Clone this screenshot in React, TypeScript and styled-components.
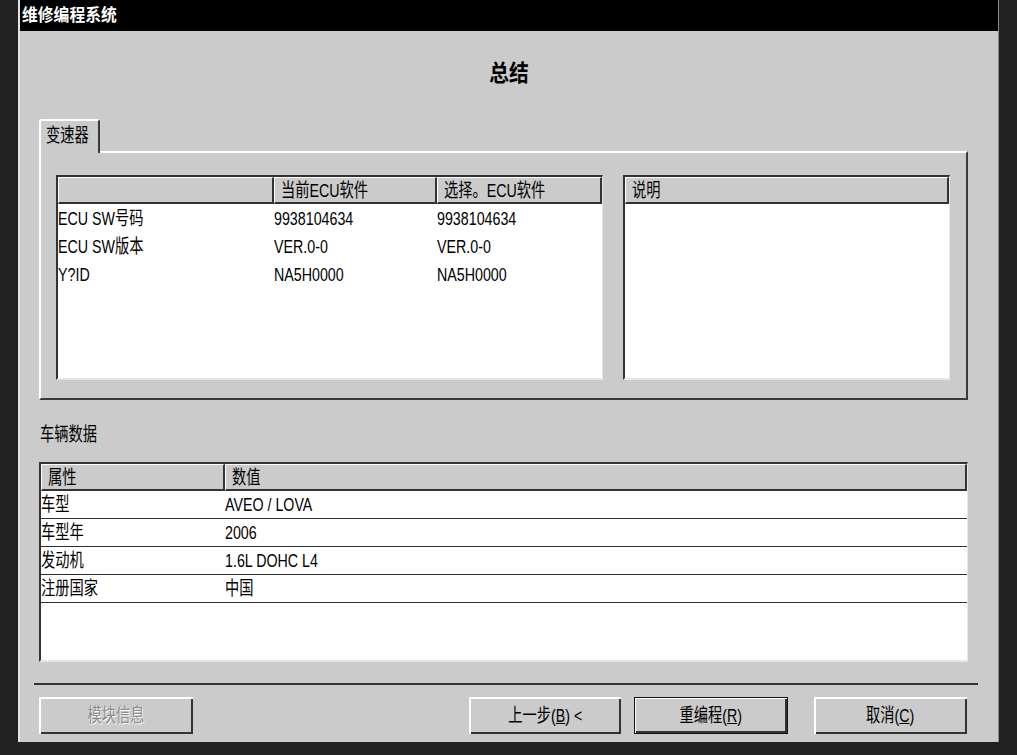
import React from 'react'
import styled, { createGlobalStyle } from 'styled-components'

const FONT = `"Liberation Sans", "Noto Sans CJK SC", sans-serif`

const GlobalStyle = createGlobalStyle`
  html, body {
    margin: 0;
    padding: 0;
    background: #222;
  }
  body {
    font-family: ${FONT};
    color: #000;
  }
`

// summary rows of the ECU table
const ECU_ROWS = [
  { name: 'ECU SW号码', current: '9938104634', selected: '9938104634' },
  { name: 'ECU SW版本', current: 'VER.0-0', selected: 'VER.0-0' },
  { name: 'Y?ID', current: 'NA5H0000', selected: 'NA5H0000' }
]

const VEHICLE_ROWS = [
  { key: '车型', value: 'AVEO / LOVA' },
  { key: '车型年', value: '2006' },
  { key: '发动机', value: '1.6L DOHC L4' },
  { key: '注册国家', value: '中国' }
]

const App = () => {
  return (
    <Screen>
      <GlobalStyle />
      <Window>
        <TitleBar>
          <TitleText>维修编程系统</TitleText>
        </TitleBar>

        <Heading>
          <Narrow $origin="center" $scale={0.86}>总结</Narrow>
        </Heading>

        <TabStrip>
          <Tab>
            <Narrow>变速器</Narrow>
          </Tab>
        </TabStrip>

        <Panel>
          <ListBox $width={547}>
            <HeaderRow $cols="216px 163px 1fr">
              <HeaderCell />
              <HeaderCell>
                <Narrow>当前ECU软件</Narrow>
              </HeaderCell>
              <HeaderCell>
                <Narrow>选择。ECU软件</Narrow>
              </HeaderCell>
            </HeaderRow>
            <Body>
              {ECU_ROWS.map((row) => (
                <Row key={row.name} $cols="216px 163px 1fr">
                  <Cell>
                    <Narrow>{row.name}</Narrow>
                  </Cell>
                  <Cell>
                    <Narrow>{row.current}</Narrow>
                  </Cell>
                  <Cell>
                    <Narrow>{row.selected}</Narrow>
                  </Cell>
                </Row>
              ))}
            </Body>
          </ListBox>

          <ListBox>
            <HeaderRow $cols="1fr">
              <HeaderCell>
                <Narrow>说明</Narrow>
              </HeaderCell>
            </HeaderRow>
            <Body />
          </ListBox>
        </Panel>

        <SectionLabel>
          <Narrow>车辆数据</Narrow>
        </SectionLabel>

        <DataTable>
          <HeaderRow $cols="184px 1fr">
            <HeaderCell>
              <Narrow>属性</Narrow>
            </HeaderCell>
            <HeaderCell>
              <Narrow>数值</Narrow>
            </HeaderCell>
          </HeaderRow>
          {VEHICLE_ROWS.map((row) => (
            <Row key={row.key} $cols="184px 1fr" $lined>
              <Cell>
                <Narrow>{row.key}</Narrow>
              </Cell>
              <Cell>
                <Narrow>{row.value}</Narrow>
              </Cell>
            </Row>
          ))}
        </DataTable>

        <Separator />

        <ButtonRow>
          <Button $width={154} disabled>
            <Narrow $origin="center">模块信息</Narrow>
          </Button>
          <Spacer />
          <Button $width={152}>
            <Narrow $origin="center">
              上一步(<Acc>B</Acc>) &lt;
            </Narrow>
          </Button>
          <Button $width={154} $gap={13} $default>
            <Narrow $origin="center">
              重编程(<Acc>R</Acc>)
            </Narrow>
          </Button>
          <Button $width={153} $gap={26}>
            <Narrow $origin="center">
              取消(<Acc>C</Acc>)
            </Narrow>
          </Button>
        </ButtonRow>
      </Window>
    </Screen>
  )
}

// Styled components
const Screen = styled.div`
  width: 1017px;
  height: 755px;
  background: #222;
  overflow: hidden;
`

const Window = styled.div`
  margin-left: 18px;
  width: 981px;
  height: 742px;
  box-sizing: border-box;
  background: #cbcbcb;
  border-left: 2px solid #e4e4e4;
  border-right: 1px solid #8a8a8a;
  display: flex;
  flex-direction: column;
`

const TitleBar = styled.div`
  height: 31px;
  flex-shrink: 0;
  background: #000;
  color: #fff;
  display: flex;
  align-items: center;
  padding-left: 2px;
`

const TitleText = styled.span`
  display: inline-block;
  font-size: 17px;
  font-weight: bold;
  line-height: 1;
  white-space: nowrap;
  transform: scaleX(0.93);
  transform-origin: left center;
`

const Narrow = styled.span<{ $origin?: string; $scale?: number }>`
  display: inline-block;
  white-space: nowrap;
  line-height: 1;
  transform: scaleX(${(p) => p.$scale ?? 0.75});
  transform-origin: ${(p) => p.$origin ?? 'left'} center;
`

const Heading = styled.div`
  height: 88px;
  box-sizing: border-box;
  padding-top: 29px;
  text-align: center;
  font-size: 23px;
  font-weight: bold;
  flex-shrink: 0;
`

const TabStrip = styled.div`
  display: flex;
  height: 32px;
  padding-left: 19px;
  position: relative;
  z-index: 1;
  flex-shrink: 0;
`

const Tab = styled.div`
  width: 61px;
  height: 34px;
  box-sizing: border-box;
  background: #cbcbcb;
  border-top: 2px solid #fff;
  border-left: 2px solid #fff;
  border-right: 2px solid #3a3a3a;
  border-radius: 3px 3px 0 0;
  padding: 4px 0 0 5px;
  font-size: 19px;
`

const Panel = styled.div`
  margin-left: 19px;
  width: 929px;
  height: 249px;
  box-sizing: border-box;
  flex-shrink: 0;
  border-top: 2px solid #fff;
  border-left: 2px solid #fff;
  border-right: 2px solid #3a3a3a;
  border-bottom: 2px solid #3a3a3a;
  padding: 22px 16px 18px 15px;
  display: flex;
  gap: 20px;
`

const ListBox = styled.div<{ $width?: number }>`
  ${(p) => (p.$width ? `width: ${p.$width}px;` : 'flex: 1;')}
  box-sizing: border-box;
  background: #fff;
  border-top: 2px solid #333;
  border-left: 2px solid #333;
  border-right: 1px solid #e6e6e6;
  border-bottom: 2px solid #e6e6e6;
  display: flex;
  flex-direction: column;
  overflow: hidden;
`

const HeaderRow = styled.div<{ $cols: string }>`
  display: grid;
  grid-template-columns: ${(p) => p.$cols};
  height: 27px;
  flex-shrink: 0;
`

const HeaderCell = styled.div`
  box-sizing: border-box;
  background: #cbcbcb;
  border-top: 1px solid #fff;
  border-left: 1px solid #fff;
  border-right: 2px solid #333;
  border-bottom: 2px solid #333;
  padding-left: 6px;
  display: flex;
  align-items: center;
  font-size: 19px;
  overflow: hidden;
`

const Body = styled.div`
  flex: 1;
  padding-top: 1px;
`

const Row = styled.div<{ $cols: string; $lined?: boolean }>`
  display: grid;
  grid-template-columns: ${(p) => p.$cols};
  height: 28px;
  box-sizing: border-box;
  align-items: center;
  font-size: 19px;
  border-bottom: ${(p) => (p.$lined ? '1px solid #2e2e2e' : 'none')};
`

const Cell = styled.div`
  overflow: hidden;
  padding-left: 0;
`

const SectionLabel = styled.div`
  height: 62px;
  box-sizing: border-box;
  padding: 24px 0 0 20px;
  font-size: 19px;
  flex-shrink: 0;
`

const DataTable = styled(ListBox)`
  margin-left: 19px;
  width: 929px;
  height: 200px;
  flex: none;
`

const Separator = styled.div`
  margin: 21px 0 0 14px;
  width: 944px;
  height: 2px;
  background: #333;
  flex-shrink: 0;
`

const ButtonRow = styled.div`
  margin-top: 12px;
  display: flex;
  height: 37px;
  padding: 0 31px 0 19px;
  flex-shrink: 0;
`

const Spacer = styled.div`
  flex: 1;
`

const Button = styled.button<{ $width: number; $gap?: number; $default?: boolean }>`
  width: ${(p) => p.$width}px;
  height: 37px;
  margin-left: ${(p) => p.$gap ?? 0}px;
  box-sizing: border-box;
  padding: 0;
  background: #cbcbcb;
  font-family: ${FONT};
  font-size: 19px;
  color: #000;
  text-align: center;
  border: ${(p) => (p.$default ? '1px solid #111' : 'none')};
  box-shadow: ${(p) =>
    p.$default ? 'inset 1px 1px 0 #fff, inset -2px -2px 0 #333' : 'inset 2px 2px 0 #fff, inset -2px -2px 0 #333'};

  &:disabled {
    color: #8c8c8c;
    text-shadow: 1px 1px 0 #fff;
  }
`

const Acc = styled.span`
  text-decoration: underline;
`

export default App
